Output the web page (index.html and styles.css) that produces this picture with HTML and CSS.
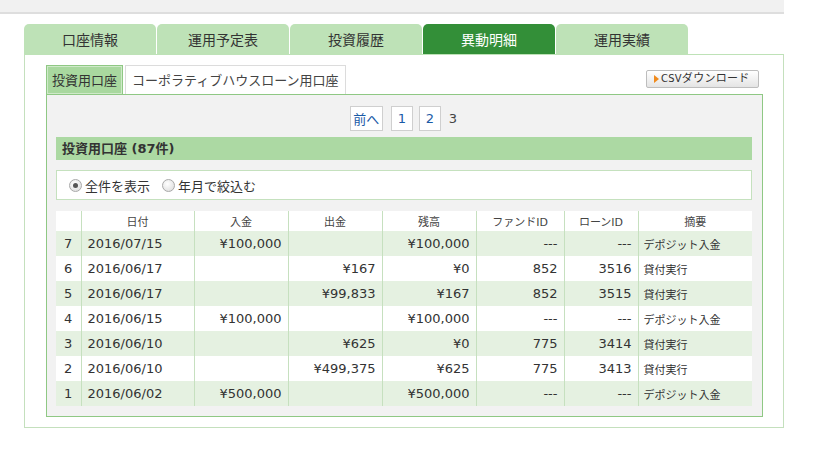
FILE: index.html
```html
<!DOCTYPE html>
<html lang="ja">
<head>
<meta charset="utf-8">
<title>異動明細</title>
<link rel="stylesheet" href="styles.css">
</head>
<body>
<div class="topbar"></div>
<div class="wrap">
  <div class="tabs">
    <div class="tab">口座情報</div>
    <div class="tab">運用予定表</div>
    <div class="tab">投資履歴</div>
    <div class="tab active">異動明細</div>
    <div class="tab">運用実績</div>
  </div>
  <div class="panel">
    <div class="subbar">
      <div class="subtabs">
        <div class="subtab on">投資用口座</div>
        <div class="subtab">コーポラティブハウスローン用口座</div>
      </div>
      <div class="csv"><span class="tri"></span>CSVダウンロード</div>
    </div>
    <div class="box">
      <div class="pager">
        <span class="pg prev">前へ</span>
        <span class="pg">1</span>
        <span class="pg">2</span>
        <span class="cur">3</span>
      </div>
      <div class="heading">投資用口座 (87件)</div>
      <div class="filter">
        <span class="radio checked"></span><span class="rlabel">全件を表示</span>
        <span class="radio"></span><span class="rlabel">年月で絞込む</span>
      </div>
      <table class="list">
        <colgroup>
          <col class="c1"><col class="c2"><col class="c3"><col class="c4"><col class="c5"><col class="c6"><col class="c7"><col class="c8">
        </colgroup>
        <thead>
          <tr><th></th><th>日付</th><th>入金</th><th>出金</th><th>残高</th><th>ファンドID</th><th>ローンID</th><th>摘要</th></tr>
        </thead>
        <tbody>
          <tr class="odd"><td class="no">7</td><td class="date">2016/07/15</td><td class="num">¥100,000</td><td class="num"></td><td class="num">¥100,000</td><td class="num">---</td><td class="num">---</td><td class="memo">デポジット入金</td></tr>
          <tr><td class="no">6</td><td class="date">2016/06/17</td><td class="num"></td><td class="num">¥167</td><td class="num">¥0</td><td class="num">852</td><td class="num">3516</td><td class="memo">貸付実行</td></tr>
          <tr class="odd"><td class="no">5</td><td class="date">2016/06/17</td><td class="num"></td><td class="num">¥99,833</td><td class="num">¥167</td><td class="num">852</td><td class="num">3515</td><td class="memo">貸付実行</td></tr>
          <tr><td class="no">4</td><td class="date">2016/06/15</td><td class="num">¥100,000</td><td class="num"></td><td class="num">¥100,000</td><td class="num">---</td><td class="num">---</td><td class="memo">デポジット入金</td></tr>
          <tr class="odd"><td class="no">3</td><td class="date">2016/06/10</td><td class="num"></td><td class="num">¥625</td><td class="num">¥0</td><td class="num">775</td><td class="num">3414</td><td class="memo">貸付実行</td></tr>
          <tr><td class="no">2</td><td class="date">2016/06/10</td><td class="num"></td><td class="num">¥499,375</td><td class="num">¥625</td><td class="num">775</td><td class="num">3413</td><td class="memo">貸付実行</td></tr>
          <tr class="odd"><td class="no">1</td><td class="date">2016/06/02</td><td class="num">¥500,000</td><td class="num"></td><td class="num">¥500,000</td><td class="num">---</td><td class="num">---</td><td class="memo">デポジット入金</td></tr>
        </tbody>
      </table>
    </div>
  </div>
</div>
</body>
</html>
```

FILE: styles.css
```css
* { box-sizing: border-box; }
html, body { margin: 0; padding: 0; background: #fff; }
body {
  font-family: "DejaVu Sans", "Noto Sans CJK JP", sans-serif;
  color: #333;
  font-size: 13px;
}
.topbar {
  width: 784px;
  height: 14px;
  background: #f1f1f1;
  border-bottom: 2px solid #dedede;
}
.wrap {
  width: 784px;
  padding: 10px 0 0 24px;
}
.tabs {
  display: flex;
  gap: 1px;
  height: 30px;
}
.tab {
  width: 132px;
  height: 30px;
  line-height: 30px;
  text-align: center;
  font-family: "Noto Sans CJK JP", sans-serif;
  font-size: 14px;
  color: #333;
  background: #bee2b7;
  border-radius: 5px 5px 0 0;
}
.tab.active {
  background: #338f38;
  color: #fff;
}
.panel {
  width: 760px;
  border: 1px solid #c4e0bd;
  border-top-color: #bee2b7;
  padding: 10px 20px 10px 21px;
}
.subbar {
  display: flex;
  justify-content: space-between;
  align-items: flex-start;
  height: 29px;
}
.subtabs {
  display: flex;
  gap: 2px;
}
.subtab {
  height: 29px;
  line-height: 27px;
  padding: 0 6px;
  white-space: nowrap;
  font-family: "Noto Sans CJK JP", sans-serif;
  font-size: 13px;
  color: #444;
  background: #fff;
  border: 1px solid #dcdcdc;
  border-bottom: none;
}
.subtab.on {
  padding: 0 5px;
  background: #a9d89f;
  border: 1px solid #8fc884;
  border-bottom: none;
  box-shadow: inset 0 0 0 1px #cfe9c9;
  color: #333;
}
.csv {
  margin-top: 5px;
  margin-right: 4px;
  width: 113px;
  height: 18px;
  border: 1px solid #bdbdbd;
  border-radius: 2px;
  background: linear-gradient(#ffffff, #e4e4e4);
  font-family: "DejaVu Sans Condensed", "Liberation Sans Narrow", "Noto Sans CJK JP", sans-serif;
  font-size: 11px;
  line-height: 16px;
  color: #333;
  padding-left: 7px;
  display: flex;
  align-items: center;
  gap: 2px;
  letter-spacing: 0.3px;
}
.tri {
  width: 0;
  height: 0;
  border-left: 5px solid #f08a1c;
  border-top: 4px solid transparent;
  border-bottom: 4px solid transparent;
}
.box {
  width: 717px;
  border: 1px solid #8fc884;
  background: #f2f2f2;
  padding: 11px 10px 10px 9px;
}
.pager {
  display: flex;
  justify-content: center;
  align-items: center;
  gap: 6px;
  height: 25px;
  padding-left: 1px;
}
.pg {
  display: inline-block;
  height: 25px;
  min-width: 22px;
  line-height: 23px;
  text-align: center;
  background: #fff;
  border: 1px solid #cfcfcf;
  color: #1a5aa6;
  font-size: 13px;
  font-family: "DejaVu Sans", "Noto Sans CJK JP", sans-serif;
}
.pg.prev {
  width: 33px;
  margin-right: 2px;
  font-family: "Noto Sans CJK JP", sans-serif;
}
.cur {
  font-size: 13px;
  color: #444;
  padding: 0 2px;
}
.heading {
  margin-top: 6px;
  height: 23px;
  line-height: 23px;
  background: #acd9a3;
  padding-left: 6px;
  font-weight: bold;
  font-size: 13px;
  color: #333;
}
.filter {
  margin-top: 10px;
  height: 30px;
  background: #fff;
  border: 1px solid #c5e1be;
  display: flex;
  align-items: center;
  padding-left: 12px;
  font-family: "Noto Sans CJK JP", sans-serif;
  font-size: 13px;
}
.radio {
  width: 13px;
  height: 13px;
  border-radius: 50%;
  border: 1px solid #a9a9a9;
  background: radial-gradient(circle at 40% 35%, #ffffff, #d9d9d9);
  position: relative;
  margin-right: 3px;
}
.radio.checked::after {
  content: "";
  position: absolute;
  left: 3px;
  top: 3px;
  width: 5px;
  height: 5px;
  border-radius: 50%;
  background: #555;
}
.rlabel {
  margin-right: 12px;
  color: #333;
}
.list {
  margin-top: 11px;
  width: 696px;
  border-collapse: collapse;
  table-layout: fixed;
}
.c1 { width: 25px; }
.c2 { width: 113px; }
.c3 { width: 94px; }
.c4 { width: 94px; }
.c5 { width: 94px; }
.c6 { width: 88px; }
.c7 { width: 74px; }
.c8 { width: 114px; }
.list th {
  height: 20px;
  padding: 0;
  background: #fff;
  font-weight: normal;
  font-size: 11px;
  color: #444;
  text-align: center;
  border-left: 1px solid #c6e0bf;
  font-family: "DejaVu Sans", "Noto Sans CJK JP", sans-serif;
}
.list th:first-child, .list td:first-child { border-left: none; }
.list td {
  height: 25px;
  padding: 0 6px;
  border-left: 1px solid #c6e0bf;
  font-size: 13px;
  color: #333;
  white-space: nowrap;
  background: #fff;
}
.list tr.odd td { background: #e5f1e1; }
.list td.no { text-align: center; padding: 0; }
.list td.num { text-align: right; }
.list td.memo {
  font-family: "Noto Sans CJK JP", sans-serif;
  font-size: 11px;
  padding-left: 5px;
}
```
